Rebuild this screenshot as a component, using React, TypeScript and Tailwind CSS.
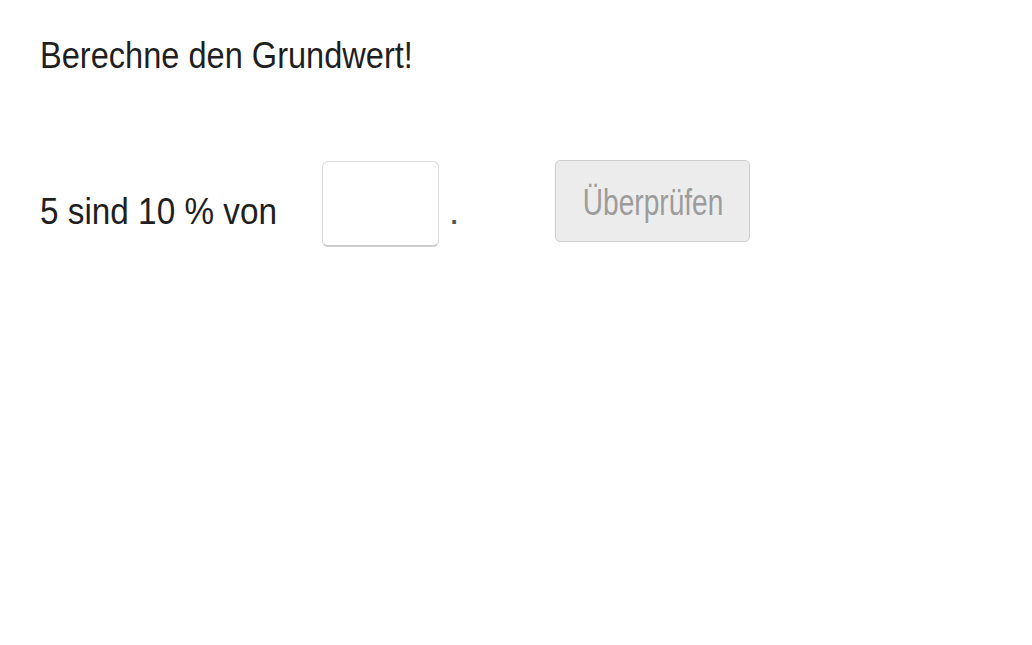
export default function App() {
  return (
    <div className="min-h-screen w-full bg-white pl-[40px] pt-[37px] font-['Liberation_Sans',Arial,sans-serif] text-[#1f1f1f]">
      <h1 className="text-[37px] leading-none font-normal">
        <span className="inline-block origin-left scale-x-[0.88]">Berechne den Grundwert!</span>
      </h1>

      <div className="mt-[86px] flex items-start">
        <span className="mt-[33px] w-[282px] shrink-0 text-[37px] leading-none">
          <span className="inline-block origin-left scale-x-[0.9]">5 sind 10 % von</span>
        </span>
        <input
          type="text"
          className="mt-[1px] h-[86px] w-[117px] shrink-0 rounded-[6px] border border-[#dcdcdc] border-b-[#cdcdcd] border-b-2 bg-white outline-none"
        />
        <span className="ml-[10px] mt-[33px] text-[37px] leading-none text-[#555]">.</span>
        <button
          disabled
          className="ml-[96px] flex h-[82px] w-[195px] shrink-0 items-start justify-center rounded-[5px] border border-[#cfcfcf] bg-[#ececec] pt-[24px] text-[36px] leading-none text-[#9c9c9c]"
        >
          <span className="inline-block scale-x-[0.78]">Überprüfen</span>
        </button>
      </div>
    </div>
  );
}
